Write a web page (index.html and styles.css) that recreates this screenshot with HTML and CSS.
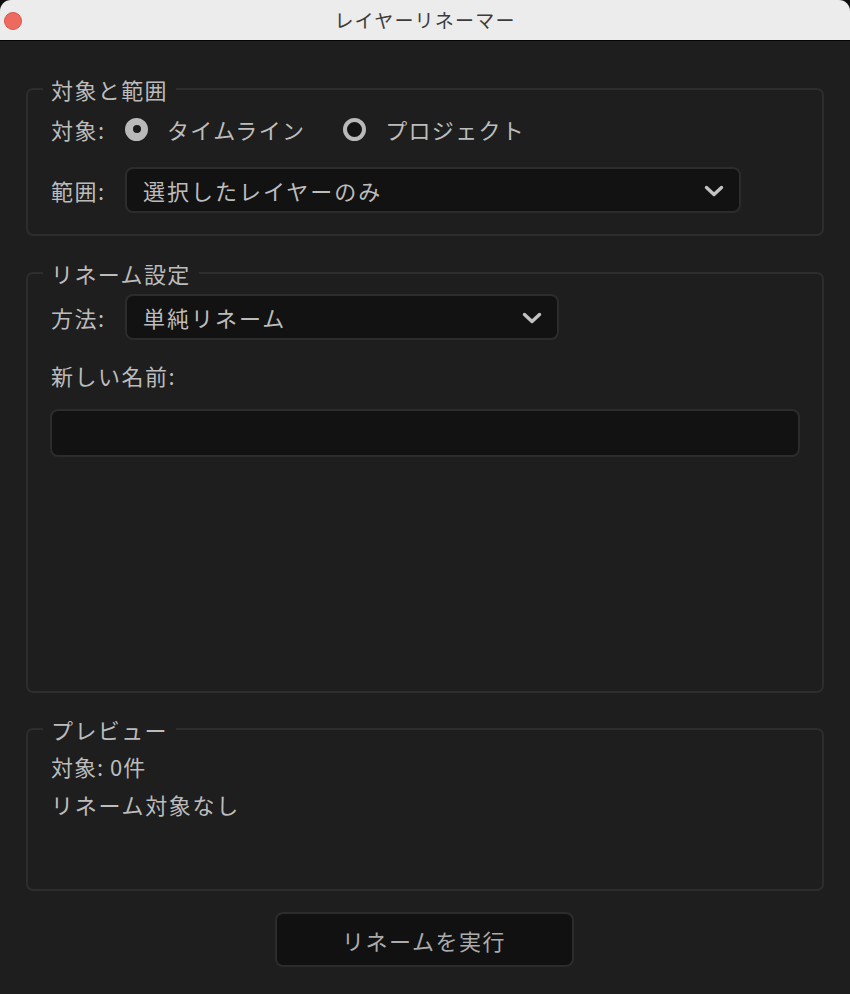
FILE: index.html
```html
<!DOCTYPE html>
<html lang="ja">
<head>
<meta charset="utf-8">
<title>レイヤーリネーマー</title>
<link rel="stylesheet" href="styles.css">
</head>
<body>
<div class="window">
  <div class="titlebar">
    <span class="close-dot"></span>
    <span class="title">レイヤーリネーマー</span>
  </div>
  <main class="content">
    <fieldset class="group group-target">
      <legend class="group-title">対象と範囲</legend>
      <div class="row row-radio">
        <span class="label">対象:</span>
        <label class="radio">
          <span class="radio-mark checked"></span>
          <span class="radio-text">タイムライン</span>
        </label>
        <label class="radio">
          <span class="radio-mark"></span>
          <span class="radio-text">プロジェクト</span>
        </label>
      </div>
      <div class="row row-select">
        <span class="label">範囲:</span>
        <div class="select select-wide">
          <span class="select-text">選択したレイヤーのみ</span>
          <svg class="chevron" viewBox="0 0 20 12" width="20" height="12"><path d="M2.5 2.5 L10 9.5 L17.5 2.5" fill="none" stroke="#c2c2c2" stroke-width="3.4" stroke-linecap="round" stroke-linejoin="round"/></svg>
        </div>
      </div>
    </fieldset>

    <fieldset class="group group-rename">
      <legend class="group-title">リネーム設定</legend>
      <div class="row row-select">
        <span class="label">方法:</span>
        <div class="select select-narrow">
          <span class="select-text">単純リネーム</span>
          <svg class="chevron" viewBox="0 0 20 12" width="20" height="12"><path d="M2.5 2.5 L10 9.5 L17.5 2.5" fill="none" stroke="#c2c2c2" stroke-width="3.4" stroke-linecap="round" stroke-linejoin="round"/></svg>
        </div>
      </div>
      <div class="field-label">新しい名前:</div>
      <div class="text-input"></div>
    </fieldset>

    <fieldset class="group group-preview">
      <legend class="group-title">プレビュー</legend>
      <div class="preview-line">対象: 0件</div>
      <div class="preview-line">リネーム対象なし</div>
    </fieldset>

    <div class="actions">
      <button class="run-button" type="button">リネームを実行</button>
    </div>
  </main>
</div>
</body>
</html>
```

FILE: styles.css
```css
* {
  box-sizing: border-box;
}

html, body {
  margin: 0;
  padding: 0;
  background: #0e0e0e;
  height: 100%;
}

body {
  font-family: "Noto Sans CJK JP", "Noto Sans", sans-serif;
  color: #bcbcbc;
  font-size: 22px;
}

.window {
  width: 850px;
  height: 994px;
  display: flex;
  flex-direction: column;
  background: #1e1e1e;
  border-radius: 11px 11px 0 0;
  overflow: hidden;
}

.titlebar {
  height: 41px;
  flex: 0 0 41px;
  background: #ececec;
  border-bottom: 1px solid #050505;
  display: flex;
  align-items: center;
  justify-content: center;
  position: relative;
}

.close-dot {
  position: absolute;
  left: 4px;
  top: 12px;
  width: 18px;
  height: 18px;
  border-radius: 50%;
  background: #ee6a5e;
  border: 1px solid #d9564b;
}

.title {
  font-size: 19px;
  color: #3c3c3c;
  letter-spacing: 1.2px;
  line-height: 1;
  margin-top: -1px;
}

.content {
  flex: 1;
  display: flex;
  flex-direction: column;
  padding: 33px 26px 27px 26px;
}

.group {
  margin: 0;
  border: 2px solid #2d2d2d;
  border-radius: 7px;
  padding: 0 22px 0 23px;
  min-width: 0;
}

.group-title {
  padding: 0 8px;
  margin-left: -8px;
  line-height: 30px;
  font-size: 22px;
  letter-spacing: 1.4px;
  color: #bcbcbc;
}

.group-target {
  padding-top: 10px;
  padding-bottom: 21px;
}

.group-rename {
  margin-top: 22px;
  padding-top: 6px;
  flex: 1;
}

.group-preview {
  margin-top: 21px;
  padding-top: 7px;
  padding-bottom: 70px;
}

.row {
  display: flex;
  align-items: center;
}

.row-radio {
  height: 30px;
}

.row-radio + .row-select {
  margin-top: 23px;
}

.label {
  width: 74px;
  flex: 0 0 74px;
  letter-spacing: 1.5px;
  line-height: 30px;
}

.radio {
  display: flex;
  align-items: center;
  margin-right: 38px;
}

.radio-mark {
  width: 23px;
  height: 23px;
  border-radius: 50%;
  border: 4px solid #b9b9b9;
  background: #141414;
  margin-right: 19px;
  position: relative;
}

.radio-mark.checked {
  background: #b9b9b9;
}

.radio-mark.checked::after {
  content: "";
  position: absolute;
  left: 3.5px;
  top: 3.5px;
  width: 8px;
  height: 8px;
  border-radius: 50%;
  background: #1a1a1a;
}

.radio-text {
  letter-spacing: 1.3px;
  line-height: 30px;
}

.select {
  height: 46px;
  background: #121212;
  border: 2px solid #2c2c2c;
  border-radius: 8px;
  display: flex;
  align-items: center;
  justify-content: space-between;
  padding: 0 15px 0 16px;
}

.select-wide {
  width: 616px;
}

.select-narrow {
  width: 434px;
}

.select-text {
  letter-spacing: 2px;
  line-height: 30px;
}

.chevron {
  display: block;
  margin-top: 1px;
}

.field-label {
  margin-top: 20px;
  line-height: 30px;
  letter-spacing: 1.5px;
}

.text-input {
  margin-top: 19px;
  margin-left: -1px;
  height: 48px;
  background: #121212;
  border: 2px solid #2c2c2c;
  border-radius: 8px;
}

.preview-line {
  line-height: 30px;
  letter-spacing: 1px;
}

.preview-line + .preview-line {
  margin-top: 8px;
  letter-spacing: 1.7px;
}

.actions {
  margin-top: 21px;
  display: flex;
  justify-content: center;
}

.run-button {
  width: 299px;
  height: 55px;
  margin-left: -2px;
  background: #111111;
  border: 2px solid #2c2c2c;
  border-radius: 8px;
  color: #ababab;
  font-family: "Noto Sans CJK JP", "Noto Sans", sans-serif;
  font-size: 22px;
  letter-spacing: 1.5px;
  padding: 0;
}
```
